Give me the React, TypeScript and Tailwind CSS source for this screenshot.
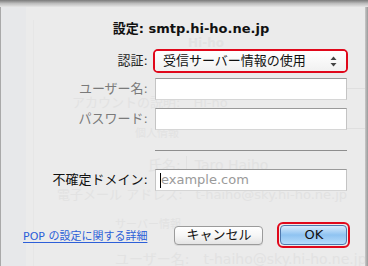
import React from "react";

const font = { fontFamily: '"DejaVu Sans", "Noto Sans CJK JP", sans-serif' };

function Ghosts() {
  const g = "absolute whitespace-nowrap text-[#e2e2e2]";
  return (
    <div className="pointer-events-none absolute inset-0">
      <div className="absolute left-0 top-[7px] h-[259px] w-[26px] bg-[#e7e8ea]" />
      <div className="absolute left-[33px] top-[20px] h-[246px] w-[1px] bg-[#e6e6e6]" />
      <div className="absolute right-0 top-[88px] h-[1px] w-[22px] bg-[#dfdfdf]" />
      <div className="absolute right-0 top-[128px] h-[1px] w-[22px] bg-[#dfdfdf]" />
      <div className="absolute left-[186px] top-[156px] h-[14px] w-[1px] bg-[#e2e2e2]" />
      <span className={`${g} left-[188px] top-[38px] text-[12px] font-bold leading-[11px]`}>Hi-ho</span>
      <span className={`${g} left-[72px] top-[93px] text-[13px]`}>アカウントの説明:　Hi-ho</span>
      <span className={`${g} left-[135px] top-[126px] text-[11px]`}>個人情報</span>
      <span className={`${g} left-[148px] top-[155px] text-[14px]`}>氏名:　Taro Haiho</span>
      <span className={`${g} left-[57px] top-[185px] text-[13px]`}>電子メール アドレス:　t-haiho@sky.hi-ho.ne.jp</span>
      <span className={`${g} left-[115px] top-[217px] text-[11px]`}>サーバー情報</span>
      <span className={`${g} left-[115px] top-[249px] text-[14px]`}>ユーザー名:　t-haiho@sky.hi-ho.ne.jp</span>
    </div>
  );
}

function Arrows() {
  return (
    <svg width="7" height="11" viewBox="0 0 7 11">
      <path d="M3.5 0.5 L6.5 4 L0.5 4 Z" fill="#444" />
      <path d="M3.5 10.5 L6.5 7 L0.5 7 Z" fill="#444" />
    </svg>
  );
}

function Input({ children }: { children?: React.ReactNode }) {
  return (
    <div className="flex h-[22px] w-[192px] items-center border border-t-[#9a9a9a] border-x-[#c4c4c4] border-b-[#d6d6d6] bg-white px-[4px]">
      {children}
    </div>
  );
}

export default function App() {
  return (
    <div
      className="relative h-[266px] w-[368px] overflow-hidden bg-[#ebebeb] text-[#1a1a1a]"
      style={font}
    >
      <Ghosts />
      <div className="absolute left-0 top-0 h-full w-[1px] bg-[#a9a9a9]" />
      <div className="absolute right-0 top-0 h-full w-[3px] bg-gradient-to-r from-[#c8c8c8] to-[#9a9a9a]" />
      <div className="relative flex h-full flex-col">
        <div className="h-[7px] bg-gradient-to-b from-[#7a7a7a] via-[#bdbdbd] to-[#e6e6e6]" />
        <div className="mt-[14px] flex justify-center pl-[14px] text-[13px] font-bold leading-[16px] text-[#111]">
          設定:&nbsp;smtp.hi-ho.ne.jp
        </div>
        <div className="mt-[12px] grid grid-cols-[148px_200px] items-center gap-x-[5px]">
          <div className="text-right text-[13px] text-[#222]">認証:</div>
          <div className="h-[24px] w-[195px] rounded-[5px] border-2 border-[#e0081b] bg-white p-0">
            <div className="flex h-full items-center justify-between rounded-[3px] bg-gradient-to-b from-white to-[#f1f1f1] pl-[8px] pr-[9px] text-[13px] text-[#111]">
              <span>受信サーバー情報の使用</span>
              <Arrows />
            </div>
          </div>
        </div>
        <div className="mt-[5px] grid grid-cols-[148px_192px] items-center gap-x-[7px] gap-y-[8px]">
          <div className="text-right text-[13px] text-[#7a7a7a]">ユーザー名:</div>
          <Input />
          <div className="text-right text-[13px] text-[#7a7a7a]">パスワード:</div>
          <Input />
        </div>
        <div className="ml-[155px] mt-[20px] h-[1px] w-[192px] bg-[#8e8e8e]" />
        <div className="mt-[18px] grid grid-cols-[148px_192px] items-center gap-x-[7px]">
          <div className="text-right text-[13px] text-[#111]">不確定ドメイン:</div>
          <Input>
            <span className="h-[15px] w-[1px] bg-black" />
            <span className="text-[13px] text-[#9a9a9a]">example.com</span>
          </Input>
        </div>
        <div className="mt-[31px] flex items-center">
          <a className="ml-[23px] mt-[4px] text-[11px] text-[#2d5fd8] underline underline-offset-[2px]">
            POP の設定に関する詳細
          </a>
          <div className="ml-[27px] flex h-[19px] w-[89px] items-center justify-center rounded-[4px] border border-[#9b9b9b] bg-gradient-to-b from-white via-[#f6f6f6] to-[#e4e4e4] text-[13px] text-[#111] shadow-[0_1px_0_rgba(0,0,0,0.08)]">
            キャンセル
          </div>
          <div className="ml-[14px] h-[26px] w-[73px] rounded-[6px] border-2 border-[#e0081b] p-[1px]">
            <div className="flex h-full w-full items-center justify-center rounded-[4px] border border-[#4f78ad] bg-gradient-to-b from-[#d8ebfc] via-[#8fc3f1] to-[#b6dcfa] text-[13px] text-[#111]">
              OK
            </div>
          </div>
        </div>
      </div>
    </div>
  );
}
